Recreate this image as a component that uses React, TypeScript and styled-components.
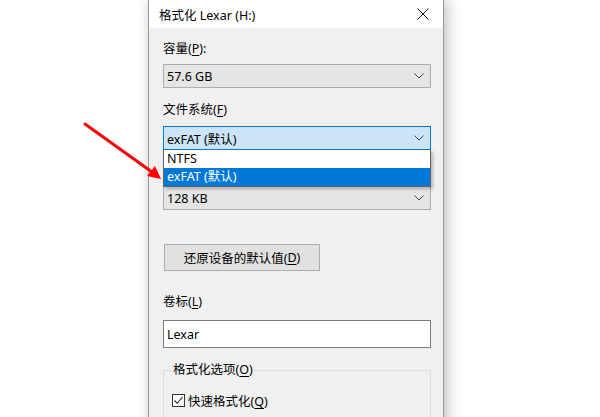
import { createGlobalStyle } from 'styled-components'
import styled from 'styled-components'

const GlobalStyle = createGlobalStyle`
  html, body {
    margin: 0;
    padding: 0;
    background: #ffffff;
    overflow: hidden;
  }
  body {
    font-family: 'Noto Sans', 'Noto Sans CJK SC', sans-serif;
    font-size: 12.5px;
    color: #000;
  }
`

const Page = styled.div`
  position: relative;
  width: 600px;
  height: 417px;
  overflow: hidden;
`

const Dialog = styled.div`
  margin-left: 148px;
  width: 294px;
  height: 440px;
  border: 1px solid #9a9a9a;
  border-top: none;
  background: #f0f0f0;
  box-shadow: 5px 0 14px rgba(0, 0, 0, 0.2), -2px 0 10px rgba(0, 0, 0, 0.08);
  display: flex;
  flex-direction: column;
`

const TitleBar = styled.div`
  height: 28px;
  background: #ffffff;
  display: flex;
  align-items: center;
  justify-content: space-between;
  padding: 0 10px 0 10px;
  font-size: 12.5px;
`

const CloseButton = styled.div`
  width: 14px;
  height: 14px;
  display: flex;
  align-items: center;
  justify-content: center;
  margin-right: 3px;
`

const Body = styled.div`
  padding: 0 12px 0 14px;
  display: flex;
  flex-direction: column;
`

const Label = styled.div<{ $top: number }>`
  margin-top: ${({ $top }) => $top}px;
  height: 18px;
  line-height: 18px;
  white-space: nowrap;
`

const Key = styled.span`
  text-decoration: underline;
  text-underline-offset: 2px;
`

const Combo = styled.div<{ $focused?: boolean }>`
  height: 24px;
  box-sizing: border-box;
  border: 1px solid ${({ $focused }) => ($focused ? '#0078d7' : '#adadad')};
  background: ${({ $focused }) => ($focused ? '#cce4f7' : '#e5e5e5')};
  display: flex;
  align-items: center;
  justify-content: space-between;
  padding: 0 6px 0 3px;
`

const Field = styled.div<{ $top: number }>`
  position: relative;
  margin-top: ${({ $top }) => $top}px;
`

const DropList = styled.div`
  position: absolute;
  left: 0;
  right: 0;
  top: 24px;
  z-index: 2;
  border: 1px solid #646464;
  border-top: none;
  background: #fff;
  box-shadow: 2px 2px 3px rgba(0, 0, 0, 0.25);
`

const Option = styled.div<{ $selected?: boolean }>`
  height: 18px;
  line-height: 18px;
  padding-left: 3px;
  background: ${({ $selected }) => ($selected ? '#0078d7' : '#fff')};
  color: ${({ $selected }) => ($selected ? '#fff' : '#000')};
`

const ResetButton = styled.div`
  margin-top: 34px;
  margin-left: 1px;
  width: 156px;
  height: 27px;
  box-sizing: border-box;
  border: 1px solid #adadad;
  background: #e1e1e1;
  display: flex;
  align-items: center;
  justify-content: center;
`

const TextInput = styled.div`
  margin-top: 9px;
  height: 28px;
  box-sizing: border-box;
  border: 1px solid #7a7a7a;
  background: #fff;
  display: flex;
  align-items: center;
  padding-left: 3px;
`

const GroupBox = styled.fieldset`
  margin: 14px 0 0 0;
  padding: 7px 8px 0 8px;
  border: 1px solid #dcdcdc;
  border-bottom: none;
  min-height: 60px;
`

const GroupLegend = styled.legend`
  padding: 0 1px;
  line-height: 16px;
`

const CheckRow = styled.div`
  display: flex;
  align-items: center;
  gap: 3px;
  margin-top: 6px;
`

const CheckBox = styled.div`
  width: 13px;
  height: 13px;
  box-sizing: border-box;
  border: 1px solid #333;
  background: #fff;
  display: flex;
  align-items: center;
  justify-content: center;
`

const Arrow = styled.svg`
  position: absolute;
  left: 0;
  top: 0;
  pointer-events: none;
`

function Chevron() {
  return (
    <svg width="10" height="6" viewBox="0 0 10 6">
      <path d="M0.5 0.5 L5 5 L9.5 0.5" fill="none" stroke="#444" strokeWidth="1" />
    </svg>
  )
}

export default function App() {
  return (
    <Page>
      <GlobalStyle />
      <Dialog>
        <TitleBar>
          <span>格式化 Lexar (H:)</span>
          <CloseButton>
            <svg width="12" height="12" viewBox="0 0 12 12">
              <path d="M0.5 0.5 L11.5 11.5 M11.5 0.5 L0.5 11.5" stroke="#111" strokeWidth="1" />
            </svg>
          </CloseButton>
        </TitleBar>
        <Body>
          <Label $top={12}>
            容量(<Key>P</Key>):
          </Label>
          <Field $top={6}>
            <Combo>
              <span>57.6 GB</span>
              <Chevron />
            </Combo>
          </Field>
          <Label $top={13}>
            文件系统(<Key>F</Key>)
          </Label>
          <Field $top={7}>
            <Combo $focused>
              <span>exFAT (默认)</span>
              <Chevron />
            </Combo>
            <DropList>
              <Option>NTFS</Option>
              <Option $selected>exFAT (默认)</Option>
            </DropList>
          </Field>
          {/* the allocation-size label sits under the open list */}
          <Label $top={12} />
          <Field $top={6}>
            <Combo>
              <span>128 KB</span>
              <Chevron />
            </Combo>
          </Field>
          <ResetButton>
            还原设备的默认值(<Key>D</Key>)
          </ResetButton>
          <Label $top={22}>
            卷标(<Key>L</Key>)
          </Label>
          <TextInput>Lexar</TextInput>
          <GroupBox>
            <GroupLegend>
              格式化选项(<Key>O</Key>)
            </GroupLegend>
            <CheckRow>
              <CheckBox>
                <svg width="11" height="11" viewBox="0 0 11 11">
                  <path d="M1.5 5.5 L4.2 8.3 L9.5 2" fill="none" stroke="#222" strokeWidth="1.1" />
                </svg>
              </CheckBox>
              <span>
                快速格式化(<Key>Q</Key>)
              </span>
            </CheckRow>
          </GroupBox>
        </Body>
      </Dialog>
      <Arrow width="600" height="417" viewBox="0 0 600 417">
        <line x1="85" y1="124" x2="152" y2="172" stroke="#ff0000" strokeWidth="3" strokeLinecap="round" />
        <polygon points="161,179 147,176 155,166" fill="#ff0000" />
      </Arrow>
    </Page>
  )
}
